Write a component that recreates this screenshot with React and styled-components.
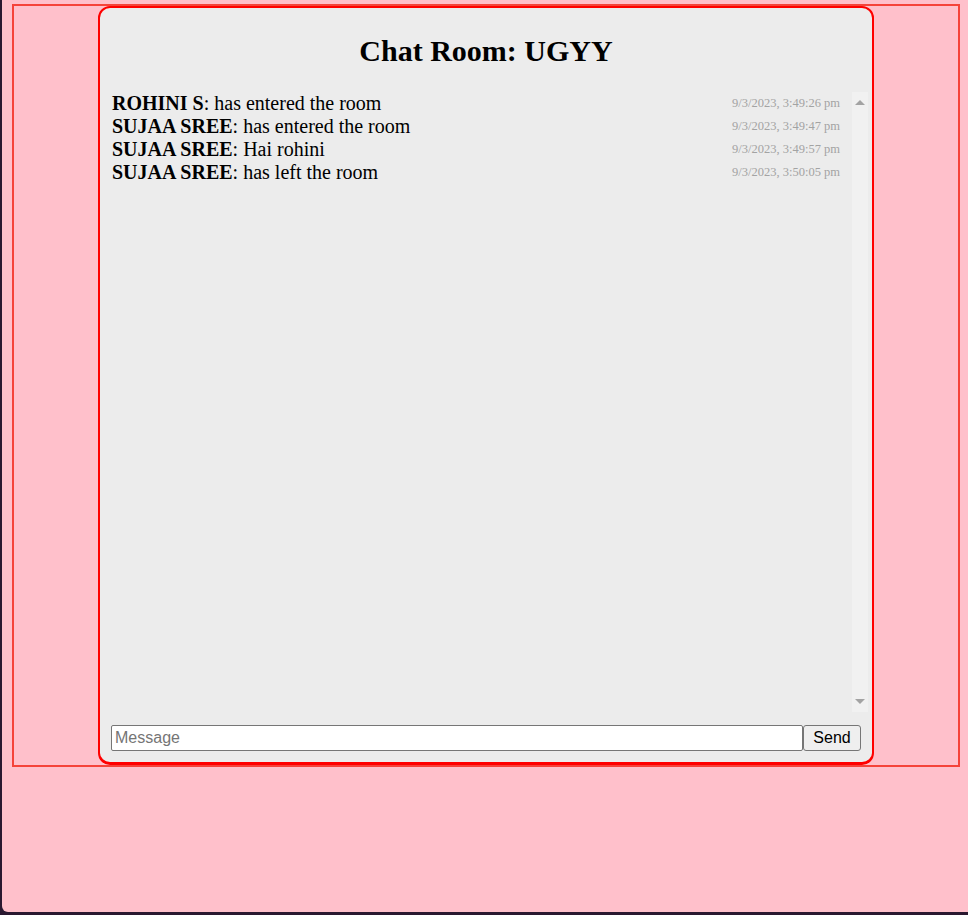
import React from "react";
import styled, { createGlobalStyle } from "styled-components";

const Global = createGlobalStyle`
  html { background: #2a1830; height: 100%; }
  body {
    margin: 0;
    height: 912px;
    margin-left: 2px;
    background: #ffc0cb;
    border-bottom-left-radius: 6px;
    font-family: "Liberation Serif", "Times New Roman", serif;
    overflow: hidden;
  }
  #root { padding: 4px 0 0 10px; }
`;

const Outer = styled.div`
  width: 948px;
  height: 763px;
  box-sizing: border-box;
  border: 2px solid #f5433a;
  display: flex;
  justify-content: center;
  align-items: flex-start;
`;

const Card = styled.div`
  width: 776px;
  height: 759px;
  box-sizing: border-box;
  border: 2px solid #ff0000;
  border-bottom-width: 3px;
  border-radius: 12px;
  background: #ececec;
  display: flex;
  flex-direction: column;
  padding: 0 0 11px 0;
`;

const Title = styled.h2`
  margin: 25px 0 24px;
  text-align: center;
  font-size: 30px;
  font-weight: bold;
  line-height: 35px;
  color: #000;
`;

const Pane = styled.div`
  flex: 1;
  min-height: 0;
  display: flex;
  margin-right: 4px;
`;

const MessageList = styled.div`
  flex: 1;
  padding: 0 12px;
  overflow-y: auto;
  scrollbar-width: none;
  &::-webkit-scrollbar { display: none; }
`;

const ScrollTrack = styled.div`
  width: 16px;
  background: #f1f1f1;
  display: flex;
  flex-direction: column;
  justify-content: space-between;
  align-items: center;
  padding: 8px 0;
`;

const Arrow = styled.span`
  width: 0;
  height: 0;
  border-left: 5px solid transparent;
  border-right: 5px solid transparent;
  ${(p) =>
    p.$down
      ? "border-top: 5px solid #a3a3a3;"
      : "border-bottom: 5px solid #a3a3a3;"}
`;

const Row = styled.div`
  display: flex;
  justify-content: space-between;
  align-items: center;
  font-size: 20px;
  line-height: 23px;
  color: #000;
`;

const Name = styled.strong`
  font-weight: bold;
`;

const Time = styled.span`
  font-size: 12.5px;
  color: #a3a3a3;
`;

const Composer = styled.form`
  display: flex;
  margin: 13px 11px 0 11px;
  height: 26px;
`;

const Input = styled.input`
  flex: 1;
  box-sizing: border-box;
  height: 26px;
  margin: 0;
  padding: 1px 3px;
  border: 1px solid #767676;
  border-radius: 2px;
  background: #fff;
  font-family: "Liberation Sans", Arial, sans-serif;
  font-size: 16px;
  &::placeholder { color: #757575; }
`;

const SendButton = styled.button`
  width: 58px;
  height: 26px;
  box-sizing: border-box;
  margin: 0;
  border: 1px solid #767676;
  border-radius: 3px;
  background: #efefef;
  font-family: "Liberation Sans", Arial, sans-serif;
  font-size: 16px;
  color: #000;
  padding: 0;
`;

const messages = [
  { user: "ROHINI S", text: "has entered the room", time: "9/3/2023, 3:49:26 pm" },
  { user: "SUJAA SREE", text: "has entered the room", time: "9/3/2023, 3:49:47 pm" },
  { user: "SUJAA SREE", text: "Hai rohini", time: "9/3/2023, 3:49:57 pm" },
  { user: "SUJAA SREE", text: "has left the room", time: "9/3/2023, 3:50:05 pm" },
];

export default function App() {
  return (
    <>
      <Global />
      <Outer>
        <Card>
          <Title>Chat Room: UGYY</Title>
          <Pane>
            <MessageList>
              {messages.map((m, i) => (
                <Row key={i}>
                  <span>
                    <Name>{m.user}</Name>: {m.text}
                  </span>
                  <Time>{m.time}</Time>
                </Row>
              ))}
            </MessageList>
            <ScrollTrack>
              <Arrow />
              <Arrow $down />
            </ScrollTrack>
          </Pane>
          <Composer onSubmit={(e) => e.preventDefault()}>
            <Input placeholder="Message" />
            <SendButton type="submit">Send</SendButton>
          </Composer>
        </Card>
      </Outer>
    </>
  );
}
